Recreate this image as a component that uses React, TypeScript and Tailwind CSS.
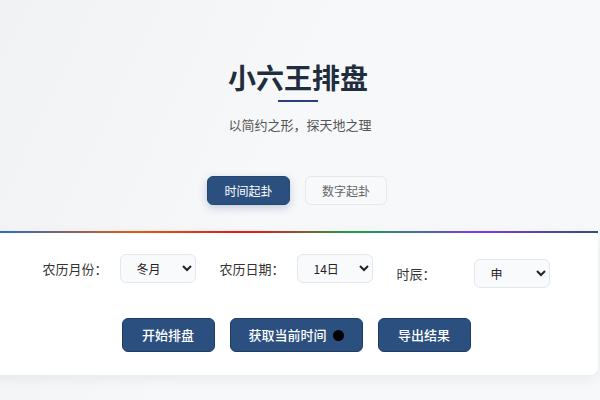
import React from 'react'

const font = { fontFamily: '"Noto Sans CJK SC", "Noto Sans", sans-serif' }

function Field({ label, value, options, className = '' }: { label: string; value: string; options: string[]; className?: string }) {
  return (
    <div className={`flex items-center ${className}`}>
      <span className="w-[77px] text-[13px] text-[#333]">{label}</span>
      <select
        defaultValue={value}
        className="w-[76px] h-[29px] pl-[12px] pr-[4px] rounded-md border border-[#e2e8f0] bg-[#f8fafc] text-[12px] text-[#222]"
      >
        {options.map((o) => (
          <option key={o}>{o}</option>
        ))}
      </select>
    </div>
  )
}

export default function App() {
  return (
    <div
      style={font}
      className="w-[600px] h-[400px] overflow-hidden bg-[linear-gradient(115deg,#f1f2f4_0%,#f4f5f7_25%,#f7f8fa_45%,#f7f8fa_100%)]"
    >
      {/* Header */}
      <div className="pt-[60px] text-center">
        <h1 className="text-[28px] leading-[34px] font-bold text-[#1f2d3d] -translate-x-[2px]">小六王排盘</h1>
        <div className="mx-auto mt-[6px] w-10 h-[2px] bg-[#2c3e7a] -translate-x-[2px]" />
        <p className="mt-[14px] text-[13px] leading-[18px] text-[#555]">以简约之形，探天地之理</p>

        {/* Tabs */}
        <div className="mt-[42px] flex justify-center gap-[15px] -translate-x-[3px]">
          <button className="w-[83px] h-[29px] rounded-md bg-[#2b5080] border border-[#24466f] text-white text-[12px] shadow-[0_3px_8px_rgba(43,80,128,0.25)]">
            时间起卦
          </button>
          <button className="w-[82px] h-[29px] rounded-md bg-[#f8f9fb] border border-[#e6e8ec] text-[#666] text-[12px]">
            数字起卦
          </button>
        </div>
      </div>

      {/* Card */}
      <div className="mt-[26px] -ml-[10px] mr-[2px] rounded-lg bg-white shadow-[0_4px_14px_rgba(0,0,0,0.06)]">
        <div className="h-[2px] bg-[linear-gradient(90deg,#1a6fd6_0%,#e8590c_24%,#e11d1d_40%,#e11d1d_44%,#16a34a_60%,#7c3aed_80%,#334e7a_100%)]" />
        <div className="pt-[21px] pb-[23px] pl-[10px]">
          <div className="flex justify-center items-start gap-[24px] -translate-x-[3px]">
            <Field label="农历月份：" value="冬月" options={['正月', '二月', '三月', '四月', '五月', '六月', '七月', '八月', '九月', '十月', '冬月', '腊月']} />
            <Field label="农历日期：" value="14日" options={['1日', '2日', '13日', '14日', '15日']} />
            <Field label="时辰：" value="申" options={['子', '丑', '寅', '卯', '辰', '巳', '午', '未', '申', '酉', '戌', '亥']} className="mt-[5px]" />
          </div>

          <div className="mt-[30px] flex justify-center gap-[15px] -translate-x-[3px]">
            <button className="w-[93px] h-[34px] rounded-md bg-[#2b5080] border border-[#1e3d66] text-white text-[13px] font-medium">
              开始排盘
            </button>
            <button className="w-[133px] h-[34px] rounded-md bg-[#2b5080] border border-[#1e3d66] text-white text-[13px] font-medium flex items-center justify-center gap-[6px]">
              获取当前时间
              <span className="w-[11px] h-[11px] rounded-full bg-black" />
            </button>
            <button className="w-[93px] h-[34px] rounded-md bg-[#2b5080] border border-[#1e3d66] text-white text-[13px] font-medium">
              导出结果
            </button>
          </div>
        </div>
      </div>
    </div>
  )
}
